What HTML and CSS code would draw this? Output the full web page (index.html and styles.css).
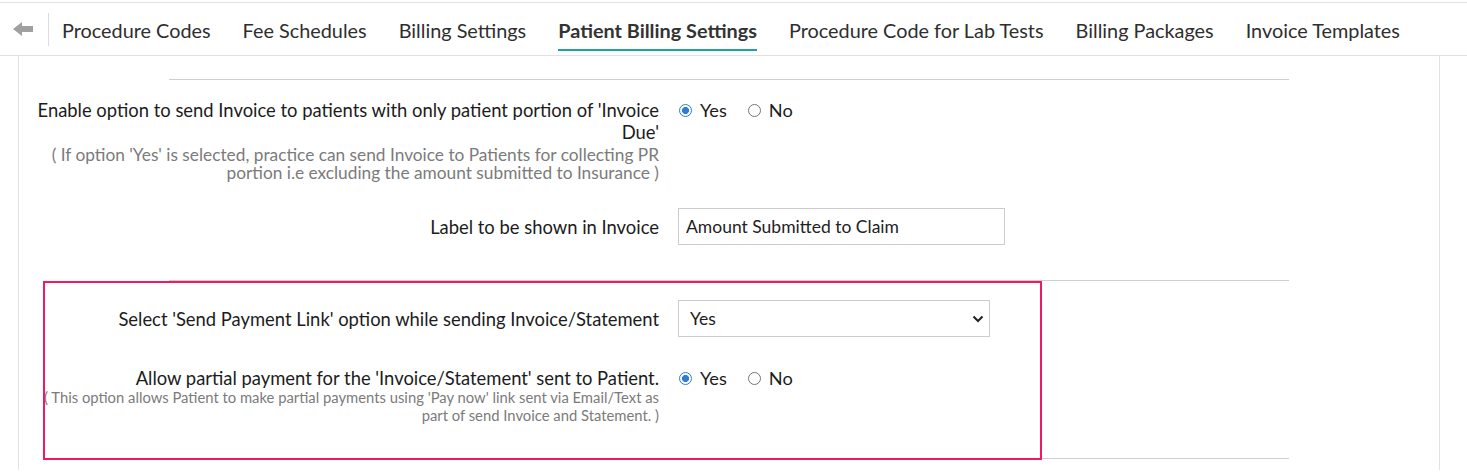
FILE: index.html
```html
<!DOCTYPE html>
<html lang="en">
<head>
<meta charset="utf-8">
<title>Patient Billing Settings</title>
<link rel="stylesheet" href="styles.css">
</head>
<body>
<header class="topbar">
  <div class="back">
    <svg width="20" height="14" viewBox="0 0 20 14" aria-hidden="true">
      <polygon points="0,7 9,0 9,4 20,4 20,10 9,10 9,14" fill="#a0a0a0"/>
    </svg>
  </div>
  <div class="divider"></div>
  <nav class="tabs">
    <a class="tab">Procedure Codes</a>
    <a class="tab">Fee Schedules</a>
    <a class="tab">Billing Settings</a>
    <a class="tab active">Patient Billing Settings</a>
    <a class="tab">Procedure Code for Lab Tests</a>
    <a class="tab">Billing Packages</a>
    <a class="tab">Invoice Templates</a>
  </nav>
</header>

<main class="panel">
  <div class="rule first"></div>

  <div class="row row-invoice">
    <div class="label">
      <div class="title">Enable option to send Invoice to patients with only patient portion of 'Invoice Due'</div>
      <div class="help help-lg">( If option 'Yes' is selected, practice can send Invoice to Patients for collecting PR portion i.e excluding the amount submitted to Insurance )</div>
    </div>
    <div class="control radios">
      <label class="radio"><input type="radio" name="r1" checked><span>Yes</span></label>
      <label class="radio"><input type="radio" name="r1"><span>No</span></label>
    </div>
  </div>

  <div class="row row-text">
    <div class="label middle">
      <div class="title">Label to be shown in Invoice</div>
    </div>
    <div class="control">
      <input class="text-input" type="text" value="Amount Submitted to Claim">
    </div>
  </div>

  <div class="rule second"></div>

  <section class="section">
    <div class="row row-select">
      <div class="label narrow middle">
        <div class="title">Select 'Send Payment Link' option while sending Invoice/Statement</div>
      </div>
      <div class="control">
        <div class="select-wrap">
          <select class="select">
            <option>Yes</option>
            <option>No</option>
          </select>
          <svg class="chevron" width="12" height="8" viewBox="0 0 12 8" aria-hidden="true">
            <polyline points="1.5,1.5 6,6 10.5,1.5" fill="none" stroke="#222" stroke-width="2"/>
          </svg>
        </div>
      </div>
    </div>

    <div class="row row-partial">
      <div class="label narrow">
        <div class="title">Allow partial payment for the 'Invoice/Statement' sent to Patient.</div>
        <div class="help help-sm">( This option allows Patient to make partial payments using 'Pay now' link sent via Email/Text as part of send Invoice and Statement. )</div>
      </div>
      <div class="control radios">
        <label class="radio"><input type="radio" name="r2" checked><span>Yes</span></label>
        <label class="radio"><input type="radio" name="r2"><span>No</span></label>
      </div>
    </div>

    <div class="highlight"></div>
  </section>

  <div class="rule"></div>
</main>
</body>
</html>
```
FILE: styles.css
```css
* { box-sizing: border-box; }

html, body {
  margin: 0;
  padding: 0;
  background: #fff;
}

body {
  font-family: Lato, "Open Sans", "Liberation Sans", sans-serif;
  color: #1c1c1c;
  padding-top: 2px;
  overflow: hidden;
}

/* ---------- top navigation ---------- */
.topbar {
  display: flex;
  align-items: center;
  height: 54px;
  border-top: 1px solid #e2e2e2;
  border-bottom: 1px solid #e2e2e2;
}

.back {
  width: 48px;
  display: flex;
  justify-content: center;
  align-items: center;
  padding-right: 2px;
}

.divider {
  width: 1px;
  height: 33px;
  background: #dcdcdc;
}

.tabs {
  display: flex;
  align-self: flex-start;
  gap: 32px;
  padding-left: 13px;
}

.tab {
  display: flex;
  align-items: center;
  height: 48px;
  padding-top: 8px;
  border-bottom: 2px solid transparent;
  font-size: 19.85px;
  color: #2e2e2e;
  white-space: nowrap;
  cursor: pointer;
}

.tab.active {
  font-weight: 700;
  color: #333;
  border-bottom-color: #1f9fa6;
}

/* ---------- content panel ---------- */
.panel {
  margin: 0 27px 0 18px;
  min-height: calc(100vh - 58px);
  border-left: 1px solid #e2e2e2;
  border-right: 1px solid #e2e2e2;
  padding-top: 23px;
}

.rule {
  margin-left: 150px;
  width: 1120px;
  height: 1px;
  background: #cfcfcf;
}

.rule.second { margin-top: 35px; }

.row {
  display: flex;
  align-items: flex-start;
}

.row-invoice { margin-top: 19px; }
.row-text { margin-top: 26px; align-items: center; }
.row-select { align-items: center; }
.row-partial { margin-top: 30px; }

.label {
  margin-left: 10px;
  width: 630px;
  text-align: right;
  flex: none;
}

.label.narrow {
  margin-left: 21px;
  width: 619px;
}

.title {
  font-size: 18.4px;
  line-height: 22px;
  color: #1c1c1c;
}

.help {
  color: #7b7b7b;
  line-height: 18px;
}

.help-lg {
  margin-top: 3px;
  font-size: 17.3px;
}

.help-sm {
  margin-top: -1px;
  font-size: 14.8px;
}

.control {
  margin-left: 19px;
}

/* ---------- radios ---------- */
.radios {
  display: flex;
  align-items: center;
  height: 22px;
  gap: 20px;
}

.radio {
  display: flex;
  align-items: center;
  gap: 8px;
  font-size: 18.2px;
  color: #1c1c1c;
  cursor: pointer;
}

.radio input {
  appearance: none;
  -webkit-appearance: none;
  margin: 0 0 0 1px;
  width: 13px;
  height: 13px;
  border: 1px solid #767676;
  border-radius: 50%;
  background: #fff;
}

.radio input:checked {
  border: 1.5px solid #2f7cd3;
  background: radial-gradient(circle, #2f7cd3 0 3.3px, #fff 3.8px);
}

/* ---------- inputs ---------- */
.text-input {
  width: 327px;
  height: 37px;
  border: 1px solid #cccccc;
  padding: 0 7px;
  font-family: inherit;
  font-size: 17.5px;
  color: #222;
  background: #fff;
  outline: none;
}

.select-wrap {
  position: relative;
  width: 312px;
}

.select {
  appearance: none;
  -webkit-appearance: none;
  width: 312px;
  height: 37px;
  border: 1px solid #cccccc;
  border-radius: 0;
  padding: 0 11px;
  font-family: inherit;
  font-size: 17.5px;
  color: #1c1c1c;
  background: #fff;
  outline: none;
}

.chevron {
  position: absolute;
  right: 6px;
  top: 15px;
  pointer-events: none;
}

/* ---------- highlighted section ---------- */
.section {
  position: relative;
  padding-top: 19px;
  padding-bottom: 34px;
}

.highlight {
  position: absolute;
  left: 24px;
  top: 0;
  width: 999px;
  height: 179px;
  border: 2px solid #f01a5f;
  pointer-events: none;
}
```
